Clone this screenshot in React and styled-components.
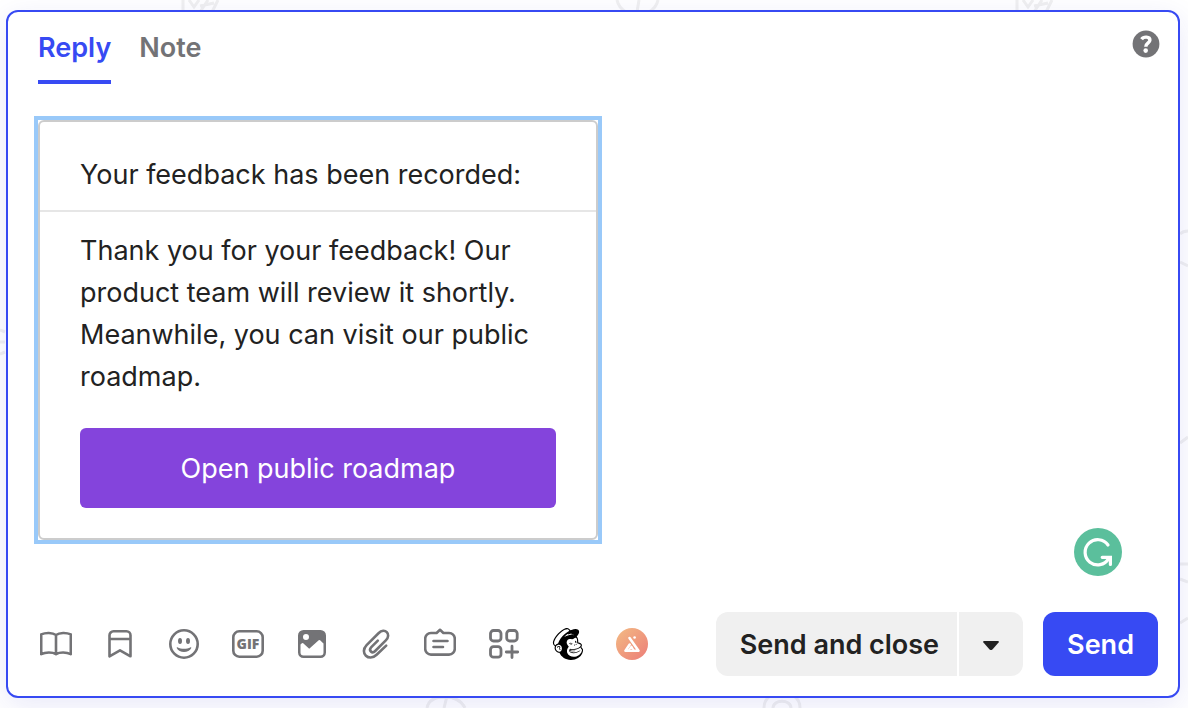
import styled, { createGlobalStyle, css } from "styled-components";
import { SiMailchimp } from "react-icons/si";

const tools = [
  { label: "Insert article", icon: <ArticleIcon /> },
  { label: "Saved replies", icon: <BookmarkIcon /> },
  { label: "Emoji", icon: <EmojiIcon /> },
  { label: "Insert GIF", icon: <GifIcon /> },
  { label: "Insert image", icon: <ImageIcon /> },
  { label: "Attach file", icon: <ClipIcon /> },
  { label: "Custom bot", icon: <BotIcon /> },
  { label: "Apps", icon: <AppsIcon /> },
  { label: "Mailchimp", icon: <SiMailchimp size={32} color="#000000" /> },
  { label: "Product feedback", icon: <FeedbackIcon /> },
];

export default function App() {
  return (
    <>
      <GlobalStyle />
      <StyledPage>
        <Doodles />
        <StyledComposer>
          <StyledHeader>
            <StyledTabs>
              <StyledTab type="button" $active>
                Reply
              </StyledTab>
              <StyledTab type="button">Note</StyledTab>
            </StyledTabs>
            <StyledHelpButton type="button" aria-label="Help">
              <HelpIcon />
            </StyledHelpButton>
          </StyledHeader>

          <StyledEditor>
            <StyledSelection>
              <StyledCard>
                <StyledCardTitle>
                  Your feedback has been recorded:
                </StyledCardTitle>
                <StyledCardBody>
                  <StyledText>
                    Thank you for your feedback! Our product team will review
                    it shortly. Meanwhile, you can visit our public roadmap.
                  </StyledText>
                  <StyledCardButton type="button">
                    Open public roadmap
                  </StyledCardButton>
                </StyledCardBody>
              </StyledCard>
            </StyledSelection>
            <StyledGrammarButton type="button" aria-label="Check grammar">
              <GrammarIcon />
            </StyledGrammarButton>
          </StyledEditor>

          <StyledFooter>
            <StyledTools>
              {tools.map(({ label, icon }) => (
                <StyledToolButton key={label} type="button" aria-label={label}>
                  {icon}
                </StyledToolButton>
              ))}
            </StyledTools>
            <StyledActions>
              <StyledSplit>
                <StyledButton type="button" $split>
                  Send and close
                </StyledButton>
                <StyledButton type="button" $split aria-label="More options">
                  <CaretIcon />
                </StyledButton>
              </StyledSplit>
              <StyledButton type="button" $primary>
                Send
              </StyledButton>
            </StyledActions>
          </StyledFooter>
        </StyledComposer>
      </StyledPage>
    </>
  );
}

function Doodles() {
  return (
    <StyledDoodles viewBox="0 0 1188 708">
      <path d="M183 0v12M189 0l5 7 5-7M208 0l-8 12M218 0l-6 12M200 6l14-3" />
      <path d="M617 0c1 5 4 9 9 12M658 0c-1 5-4 9-9 12M639 0l-2 12" />
      <path d="M1017 0v12M1023 0l5 7 5-7M1042 0l-8 12M1052 0l-6 12M1034 6l14-3" />
      <path d="M427 708c1-6 6-11 18-11s17 5 20 11M444 708l3-12" />
      <path d="M764 708c0-6 3-10 6-12M800 708c0-6-3-10-6-12M773 708c0-9 18-9 18 0" />
      <path d="M0 330l5 2M0 342h5M0 354l5-2" />
      <path d="M1180 234q3-3 8-3M1180 262l8 4M1180 443l8-6M1180 564h8M1180 579l8 3M1180 623l8-5" />
    </StyledDoodles>
  );
}

function ArticleIcon() {
  return (
    <StyledIcon viewBox="0 0 32 32">
      <path d="M16 7C12.500 4.400 5.500 4.400 1.200 6.400V26.200C5.500 24 12.500 24 16 26.200C19.500 24 26.500 24 30.800 26.200V6.400C26.500 4.400 19.500 4.400 16 7ZM16 7V26" />
    </StyledIcon>
  );
}

function BookmarkIcon() {
  return (
    <StyledIcon viewBox="0 0 32 32">
      <path d="M5.500 28.300V7.300a4 4 0 0 1 4-4h13a4 4 0 0 1 4 4v21L16 22.400ZM5.500 11h21" />
    </StyledIcon>
  );
}

function EmojiIcon() {
  return (
    <StyledIcon viewBox="0 0 32 32">
      <circle cx="16" cy="16" r="13.700" />
      <g fill="currentColor" stroke="none">
        <ellipse cx="12" cy="13" rx="2" ry="3" />
        <ellipse cx="20" cy="13" rx="2" ry="3" />
        <path d="M9.400 19.300c4 2 9.200 2 13.200 0c.5-.2.900.2.700.7c-2.400 5.300-12.200 5.300-14.600 0c-.2-.5.200-.9.700-.7Z" />
      </g>
    </StyledIcon>
  );
}

function GifIcon() {
  return (
    <StyledIcon viewBox="0 0 32 32">
      <rect x="1.300" y="3.300" width="29.400" height="25.400" rx="6" />
      <text x="16" y="21" textAnchor="middle">
        GIF
      </text>
    </StyledIcon>
  );
}

function ImageIcon() {
  return (
    <StyledIcon viewBox="0 0 32 32">
      <path
        fill="currentColor"
        stroke="none"
        fillRule="evenodd"
        d="M7.500 2h17A5.500 5.500 0 0 1 30 7.500v17a5.500 5.500 0 0 1-5.500 5.500h-17A5.500 5.500 0 0 1 2 24.500v-17A5.500 5.500 0 0 1 7.500 2ZM10 6a3 3 0 1 0 0 6a3 3 0 0 0 0-6ZM4.500 16.500v8a3 3 0 0 0 3 3h17a3 3 0 0 0 3-3V15.500l-3.400-3.200a1 1 0 0 0-1.400 0L13.200 20.800L7.200 15.300a1 1 0 0 0-1.300 0Z"
      />
    </StyledIcon>
  );
}

function ClipIcon() {
  return (
    <StyledIcon viewBox="0 0 32 32" $cap="round">
      <path d="M17.800 12.700L11.300 19.200C8.200 22.400 12 26.200 15.200 23L25.800 12.400C32 6 24.700-.8 18.500 5.200L6.600 17.100C-.9 25 8.900 34.200 16.600 26.800L26.200 17.600" />
    </StyledIcon>
  );
}

function BotIcon() {
  return (
    <StyledIcon viewBox="0 0 32 32" $cap="round">
      <path d="M7 5h5.600L16 1.800L19.400 5H25a5.800 5.800 0 0 1 5.800 5.800v10a5.800 5.800 0 0 1-5.800 5.800H7a5.800 5.800 0 0 1-5.800-5.800v-10A5.800 5.800 0 0 1 7 5ZM9.500 13h14M9.500 19h9.500" />
    </StyledIcon>
  );
}

function AppsIcon() {
  return (
    <StyledIcon viewBox="0 0 32 32" $cap="round" $weight={2.8}>
      <rect x="2.500" y="2.500" width="10.500" height="10.500" rx="3" />
      <rect x="18.700" y="2.500" width="10.500" height="10.500" rx="3" />
      <rect x="2.500" y="18.700" width="10.500" height="10.500" rx="3" />
      <path d="M24 18.200v11.400M18.300 24h11.400" />
    </StyledIcon>
  );
}

function FeedbackIcon() {
  return (
    <StyledIcon viewBox="0 0 32 32" $cap="round">
      <defs>
        <linearGradient id="peach" x1="0" y1="0" x2="1" y2="1">
          <stop offset="0" stopColor="#f3bb83" />
          <stop offset="1" stopColor="#ec7d78" />
        </linearGradient>
      </defs>
      <circle cx="16" cy="16" r="16" fill="url(#peach)" stroke="none" />
      <g stroke="#ffffff">
        <path d="M13.500 10l9 12.800H9.500l4.200-6.200" />
        <path d="M12.800 22l2.700-3.600 2 3.600" strokeWidth="1.800" />
      </g>
      <circle cx="18.600" cy="9.500" r="1.300" fill="#ffffff" stroke="none" />
    </StyledIcon>
  );
}

function HelpIcon() {
  return (
    <StyledIcon viewBox="0 0 28 28" $size={28}>
      <circle cx="14" cy="14" r="13.400" fill="currentColor" stroke="none" />
      <path
        d="M9.600 9.200C11.500 6.400 18 6.200 17.900 10.200C17.800 13 13.900 12.800 13.800 16.800"
        stroke="#ffffff"
        strokeWidth="3.400"
      />
      <circle cx="13.700" cy="20.600" r="2.300" fill="#ffffff" stroke="none" />
    </StyledIcon>
  );
}

function GrammarIcon() {
  return (
    <StyledIcon viewBox="0 0 48 48" $size={48} $cap="round">
      <circle cx="24" cy="24" r="24" fill="#5bbf9c" stroke="none" />
      <g stroke="#ffffff" strokeWidth="3.200">
        <path d="M34 17A12.600 12.600 0 1 0 34.600 30.600" />
        <path d="M28.200 29.300h8.200v7.200" strokeLinejoin="miter" />
      </g>
    </StyledIcon>
  );
}

function CaretIcon() {
  return (
    <StyledIcon viewBox="0 0 16 12" $size={16}>
      <path
        fill="#222222"
        stroke="none"
        d="M1 3h14c.8 0 1.200.8.600 1.500l-6.200 7c-.8.800-2 .8-2.800 0L.4 4.500C-.2 3.800.2 3 1 3Z"
      />
    </StyledIcon>
  );
}

const GlobalStyle = createGlobalStyle`
  *,
  *::before,
  *::after {
    box-sizing: border-box;
  }
  body {
    margin: 0;
    color: #222222;
    font-family: Inter, "Liberation Sans", sans-serif;
    font-size: 27px;
  }
  button {
    margin: 0;
    padding: 0;
    border: none;
    background: none;
    color: inherit;
    font: inherit;
    cursor: pointer;
  }
`;

const StyledPage = styled.div`
  position: relative;
  display: flex;
  min-height: 100vh;
  padding: 10px 8px 10px 6px;
  background-color: #ffffff;
  overflow: hidden;
`;

const StyledDoodles = styled.svg`
  position: absolute;
  inset: 0;
  width: 100%;
  height: 100%;
  fill: none;
  stroke: #f0f0f0;
  stroke-width: 3;
`;

const StyledComposer = styled.section`
  position: relative;
  flex: 1;
  display: flex;
  flex-direction: column;
  min-width: 0;
  background-color: #ffffff;
  border: 2px solid #374af3;
  border-radius: 12px;
  box-shadow: 0 8px 30px rgba(40, 40, 200, 0.1);
`;

const StyledHeader = styled.header`
  display: flex;
  justify-content: space-between;
  align-items: flex-start;
  padding: 18px 18px 0 30px;
`;

const StyledTabs = styled.nav`
  display: flex;
  gap: 28px;
`;

const StyledTab = styled.button`
  height: 54px;
  padding-bottom: 14px;
  border-bottom: 4px solid transparent;
  color: #737376;
  font-weight: 600;
  line-height: 36px;
  ${({ $active }) =>
    $active &&
    css`
      border-color: #374af3;
      color: #374af3;
    `}
`;

const StyledHelpButton = styled.button`
  display: flex;
`;

const StyledEditor = styled.div`
  position: relative;
  flex: 1;
  padding: 32px 26px;
`;

const StyledSelection = styled.div`
  width: 568px;
  max-width: 100%;
  border: 4px solid #99c9f9;
`;

const StyledCard = styled.article`
  border: 2px solid #cccccc;
  border-radius: 6px;
`;

const StyledCardTitle = styled.p`
  margin: 0;
  padding: 32px 40px 14px;
  border-bottom: 2px solid #e6e6e6;
  line-height: 42px;
`;

const StyledCardBody = styled.div`
  padding: 18px 40px 30px;
`;

const StyledText = styled.p`
  margin: 0 0 30px;
  line-height: 42px;
`;

const StyledCardButton = styled.button`
  width: 100%;
  height: 80px;
  border-radius: 6px;
  background-color: #8444dc;
  color: #ffffff;
`;

const StyledGrammarButton = styled.button`
  position: absolute;
  right: 56px;
  bottom: 36px;
  display: flex;
  border-radius: 50%;
`;

const StyledFooter = styled.footer`
  display: flex;
  flex-wrap: wrap;
  justify-content: space-between;
  align-items: center;
  gap: 20px;
  padding: 0 20px 20px 32px;
`;

const StyledTools = styled.div`
  display: flex;
  gap: 32px;
`;

const StyledToolButton = styled.button`
  display: flex;
`;

const StyledActions = styled.div`
  display: flex;
  gap: 20px;
`;

const StyledSplit = styled.div`
  display: flex;
  gap: 2px;
  border-radius: 12px;
  overflow: hidden;
`;

const StyledButton = styled.button`
  display: flex;
  justify-content: center;
  align-items: center;
  height: 64px;
  padding: 0 24px;
  border-radius: 12px;
  background-color: #f0f0f0;
  font-weight: 600;
  white-space: nowrap;
  ${({ $split }) =>
    $split &&
    css`
      border-radius: 0;
      &:first-child {
        padding-right: 18px;
      }
    `}
  ${({ $primary }) =>
    $primary &&
    css`
      background-color: #374af3;
      color: #ffffff;
    `}
`;

const StyledIcon = styled.svg`
  display: block;
  width: ${({ $size }) => $size || 32}px;
  flex-shrink: 0;
  color: #737376;
  fill: none;
  stroke: currentColor;
  stroke-width: ${({ $weight }) => $weight || 2.6};
  stroke-linecap: ${({ $cap }) => $cap || "butt"};
  stroke-linejoin: round;

  text {
    fill: currentColor;
    stroke: none;
    font-family: "Open Sans", sans-serif;
    font-size: 14px;
    font-weight: 800;
  }
`;
